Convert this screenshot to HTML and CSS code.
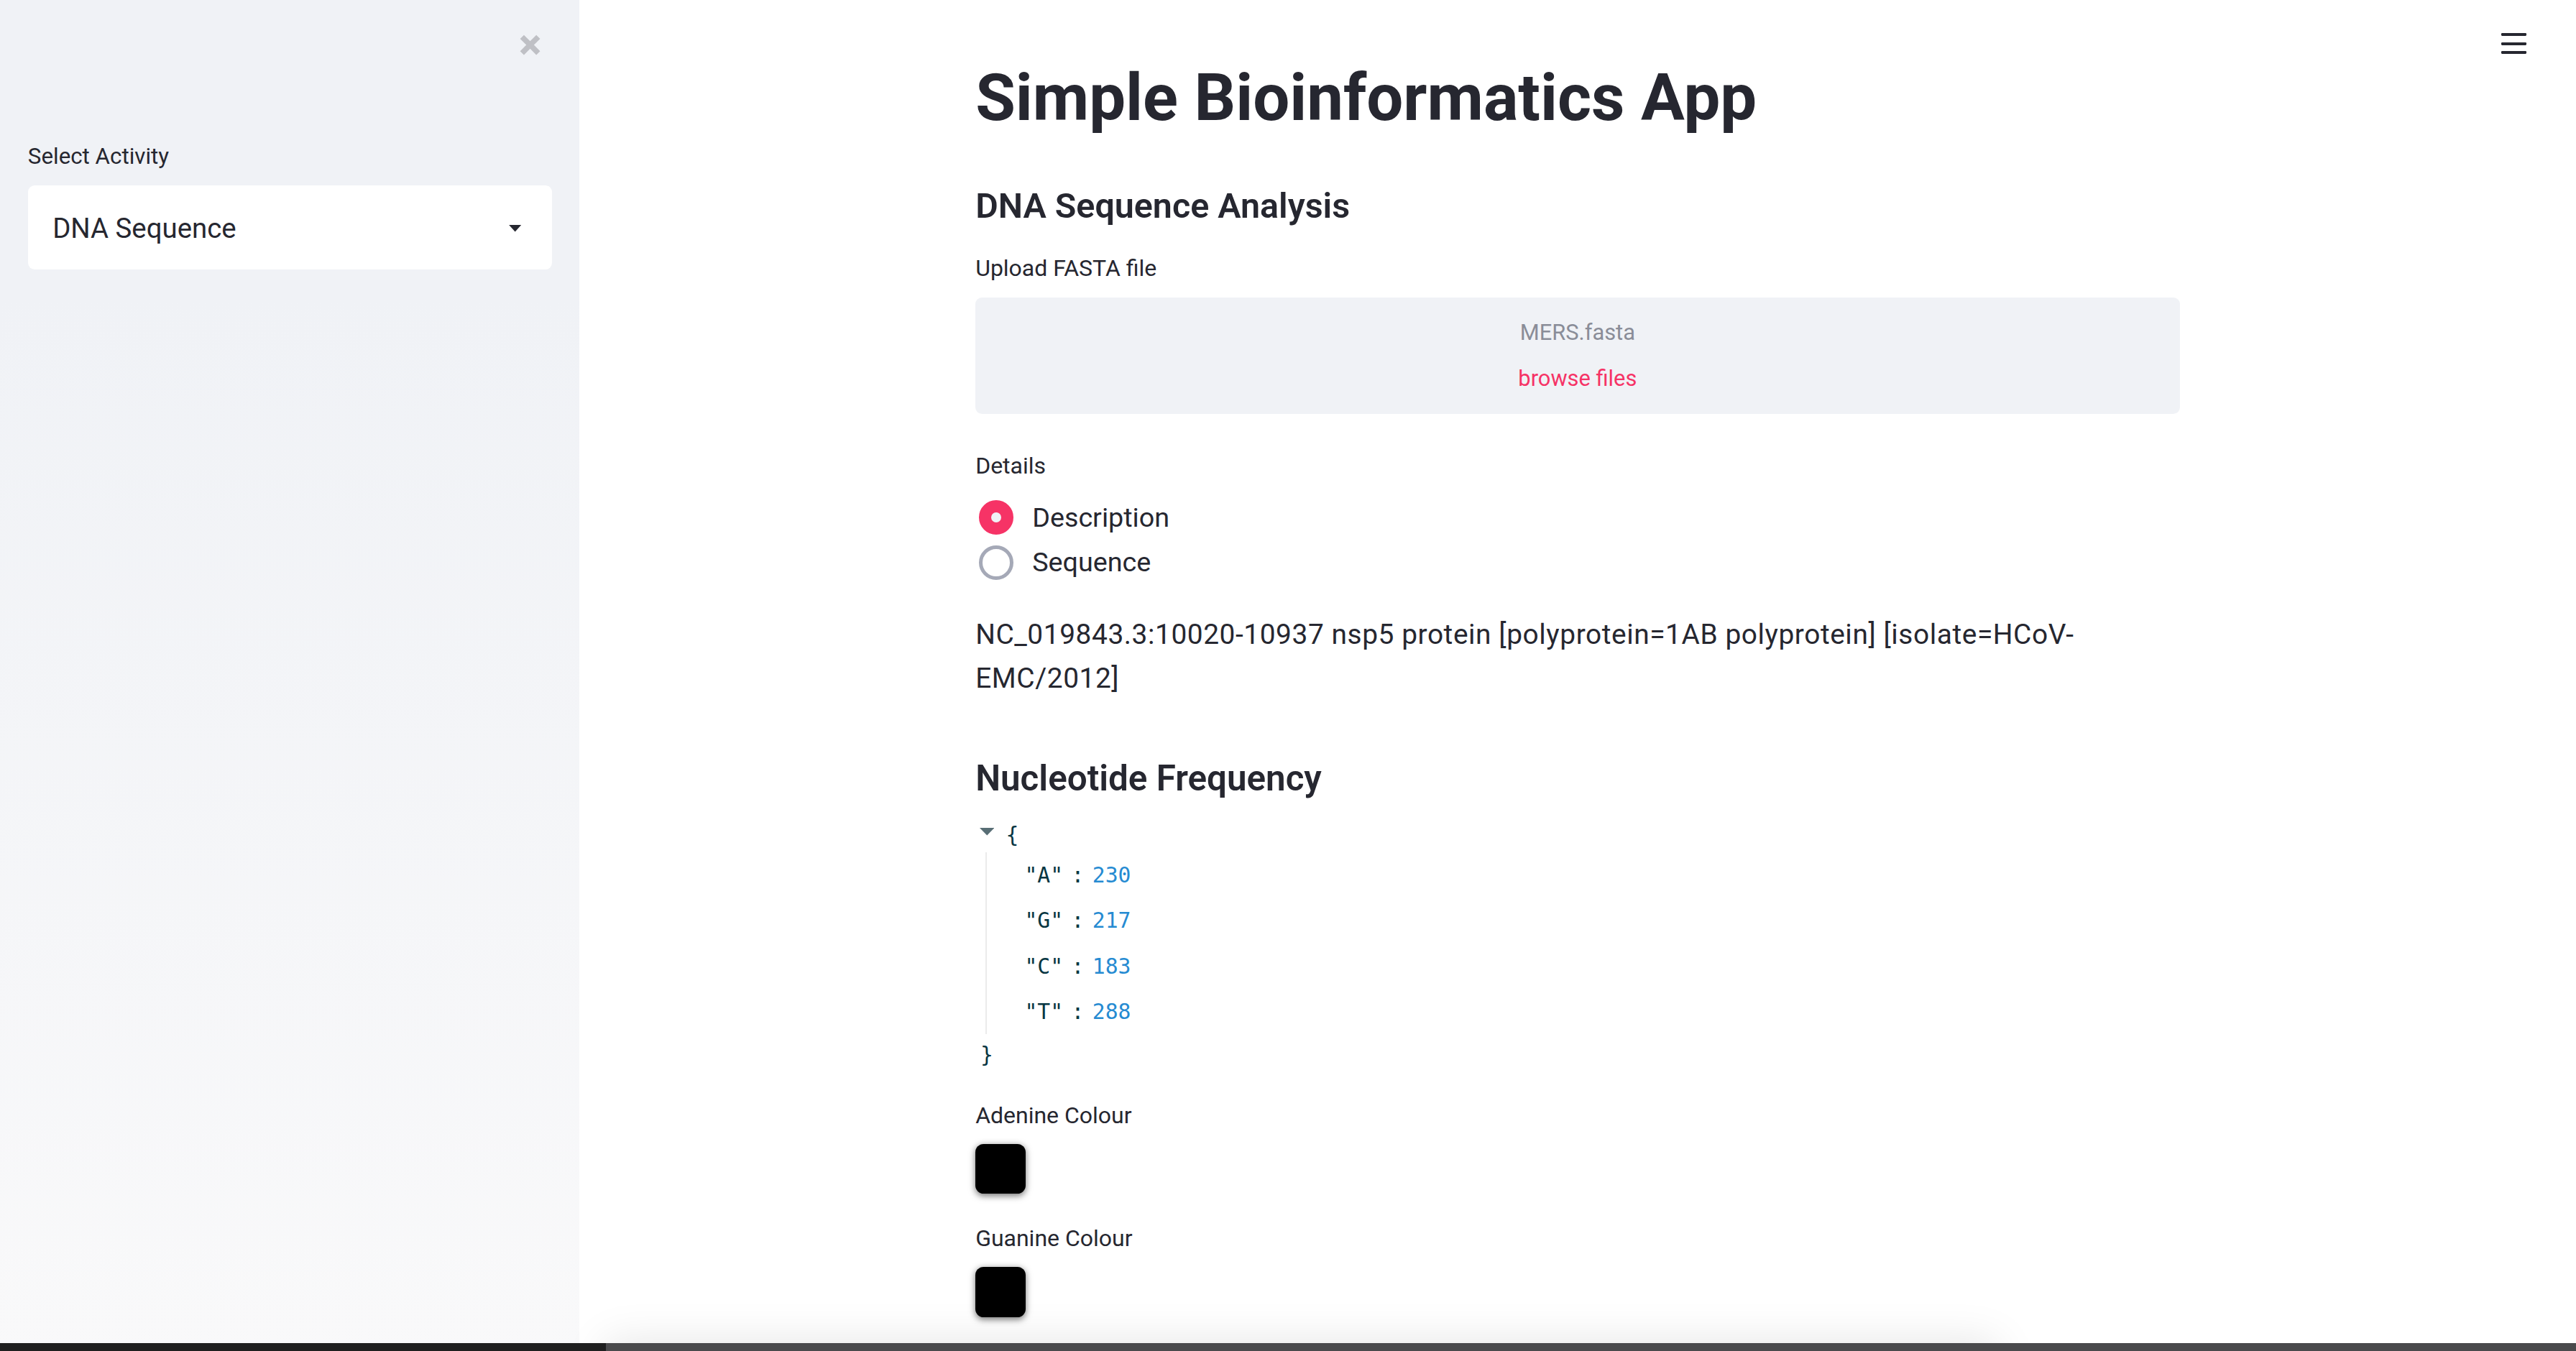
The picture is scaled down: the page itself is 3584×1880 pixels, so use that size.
FILE: index.html
```html
<!DOCTYPE html>
<html lang="en">
<head>
<meta charset="utf-8">
<title>Simple Bioinformatics App</title>
<link rel="stylesheet" href="styles.css">
</head>
<body>
<div class="app">
  <aside class="sidebar">
    <div class="sidebar-top">
      <svg class="close-icon" viewBox="0 0 15 15" width="14.5" height="14.5" aria-label="Close sidebar">
        <path d="M1.2 3.6 L3.6 1.2 L7.5 5.1 L11.4 1.2 L13.8 3.6 L9.9 7.5 L13.8 11.4 L11.4 13.8 L7.5 9.9 L3.6 13.8 L1.2 11.4 L5.1 7.5 Z" fill="#bfc0c5"/>
      </svg>
    </div>
    <div class="label sidebar-label">Select Activity</div>
    <div class="selectbox">
      <span class="select-value">DNA Sequence</span>
      <svg class="caret" viewBox="0 0 8 4.5" width="7.6" height="4.2"><path d="M0 0 H8 L4 4.5 Z" fill="#262730"/></svg>
    </div>
  </aside>

  <main class="main">
    <button class="menu-btn" aria-label="Menu">
      <span class="menu-line"></span>
      <span class="menu-line"></span>
      <span class="menu-line"></span>
    </button>

    <div class="block">
      <h1 class="title">Simple Bioinformatics App</h1>
      <h3 class="subheader first-sub">DNA Sequence Analysis</h3>

      <div class="label upload-label">Upload FASTA file</div>
      <div class="dropzone">
        <div class="file-name">MERS.fasta</div>
        <div class="browse">browse files</div>
      </div>

      <div class="label details-label">Details</div>
      <div class="radio-group">
        <div class="radio-row">
          <span class="radio radio-on"></span>
          <span class="radio-text">Description</span>
        </div>
        <div class="radio-row">
          <span class="radio radio-off"></span>
          <span class="radio-text">Sequence</span>
        </div>
      </div>

      <p class="desc">NC_019843.3:10020-10937 nsp5 protein [polyprotein=1AB polyprotein] [isolate=HCoV-EMC/2012]</p>

      <h3 class="subheader second-sub">Nucleotide Frequency</h3>

      <div class="json">
        <div class="json-open">
          <svg class="json-caret" viewBox="0 0 9 4.6" width="9" height="4.6"><path d="M0 0 H9 L4.5 4.6 Z" fill="#586e75"/></svg>
          <span class="brace">{</span>
        </div>
        <div class="json-body">
          <div class="json-row"><span class="key">"A"</span><span class="colon">:</span><span class="num">230</span></div>
          <div class="json-row"><span class="key">"G"</span><span class="colon">:</span><span class="num">217</span></div>
          <div class="json-row"><span class="key">"C"</span><span class="colon">:</span><span class="num">183</span></div>
          <div class="json-row"><span class="key">"T"</span><span class="colon">:</span><span class="num">288</span></div>
        </div>
        <div class="json-close"><span class="brace">}</span></div>
      </div>

      <div class="label colour-label first-colour">Adenine Colour</div>
      <div class="swatch swatch-first"></div>

      <div class="label colour-label second-colour">Guanine Colour</div>
      <div class="swatch swatch-second"></div>
    </div>

    <div class="bottom-shadow"></div>
  </main>
</div>
<div class="window-edge">
  <div class="edge-left"></div>
  <div class="edge-right"></div>
</div>
</body>
</html>
```
FILE: styles.css
```css
html {
  zoom: 2.285714;
  overflow: hidden;
}

body {
  margin: 0;
  font-family: Roboto, "Liberation Sans", Arial, sans-serif;
  color: #262730;
  background: #ffffff;
  overflow: hidden;
}

.app {
  display: flex;
  height: 822.6px;
  overflow: hidden;
}

/* ---------- Sidebar ---------- */
.sidebar {
  width: 352.5px;
  flex: none;
  box-sizing: border-box;
  padding: 20px 16.5px 0 17px;
  background: linear-gradient(180deg, #f0f2f6 0%, #f0f2f6 22%, #f9f9fa 100%);
}

.sidebar-top {
  display: flex;
  justify-content: flex-end;
  padding-right: 6px;
  height: 14.5px;
}

.close-icon {
  display: block;
}

.label {
  font-size: 14px;
  line-height: 20px;
  color: #262730;
}

.sidebar-label {
  margin-top: 51px;
  font-size: 13.7px;
}

.selectbox {
  margin-top: 7.6px;
  height: 51px;
  background: #ffffff;
  border-radius: 4px;
  display: flex;
  align-items: center;
  justify-content: space-between;
  padding: 0 18.5px 0 15px;
}

.select-value {
  font-size: 16.8px;
  line-height: 24px;
  position: relative;
  top: 0.6px;
}

.caret {
  display: block;
  position: relative;
  top: 0.5px;
}

/* ---------- Main ---------- */
.main {
  flex: 1;
  position: relative;
  background: #ffffff;
}

.menu-btn {
  position: absolute;
  top: 20px;
  right: 30px;
  width: 15.5px;
  height: 13px;
  padding: 0;
  border: 0;
  background: transparent;
  display: flex;
  flex-direction: column;
  justify-content: space-between;
}

.menu-line {
  display: block;
  width: 15.5px;
  height: 1.8px;
  background: #262730;
  border-radius: 0.5px;
}

.block {
  max-width: 733px;
  margin: 0 auto;
  padding-top: 36px;
}

.title {
  margin: 0;
  font-size: 39.6px;
  line-height: 48px;
  font-weight: 700;
  color: #262730;
}

.subheader {
  margin: 0;
  font-size: 21.2px;
  line-height: 28px;
  font-weight: 600;
  color: #262730;
}

.first-sub {
  margin-top: 27.6px;
}

.upload-label {
  margin-top: 14px;
}

.dropzone {
  margin-top: 7.4px;
  height: 71px;
  box-sizing: border-box;
  padding-top: 7.4px;
  background: #f0f2f6;
  border-radius: 4px;
  text-align: center;
  font-size: 13.5px;
  line-height: 28px;
}

.file-name {
  color: #8a8d98;
}

.browse {
  color: #f63366;
}

.details-label {
  margin-top: 21.9px;
}

.radio-group {
  margin-top: 7.4px;
}

.radio-row {
  display: flex;
  align-items: center;
  height: 27.5px;
}

.radio {
  box-sizing: border-box;
  width: 21px;
  height: 21px;
  border-radius: 50%;
  margin-left: 2px;
  margin-right: 11.6px;
  flex: none;
}

.radio-on {
  border: 7.5px solid #f63366;
  background: #f0f2f6;
}

.radio-off {
  border: 2.3px solid #a5a9b7;
  background: #ffffff;
}

.radio-text {
  font-size: 16.5px;
  line-height: 27.5px;
}

.desc {
  margin: 16.3px 0 0 0;
  font-size: 17px;
  letter-spacing: 0.25px;
  line-height: 26.7px;
}

.second-sub {
  margin-top: 34px;
  font-size: 21.6px;
}

/* ---------- JSON viewer ---------- */
.json {
  margin-top: 10px;
  font-family: "DejaVu Sans Mono", "Liberation Mono", monospace;
  font-size: 13px;
  color: #073642;
}

.json-open {
  display: flex;
  align-items: center;
  height: 21px;
  padding-left: 0.5px;
}

.json-caret {
  display: block;
  margin-left: 2px;
  margin-right: 7px;
  position: relative;
  top: -2px;
}

.brace {
  line-height: 20px;
}

.json-body {
  margin-left: 6px;
  border-left: 1px solid #ebebeb;
  padding-left: 23px;
}

.json-row {
  line-height: 27.7px;
  height: 27.7px;
}

.colon {
  margin: 0 5px;
}

.num {
  color: #268bd2;
}

.json-close {
  line-height: 23px;
  padding-left: 3px;
  padding-top: 1px;
}

.json-close .brace {
  line-height: 23px;
}

/* ---------- Colour pickers ---------- */
.first-colour {
  margin-top: 15.8px;
}

.second-colour {
  margin-top: 17.2px;
}

.swatch {
  width: 30.5px;
  height: 30.5px;
  border-radius: 5px;
  background: #000000;
  box-shadow: 0 1px 4px rgba(0, 0, 0, 0.55);
}

.swatch-first {
  margin-top: 6.8px;
}

.swatch-second {
  margin-top: 7.3px;
}

.bottom-shadow {
  position: absolute;
  left: 22px;
  width: 835px;
  bottom: -30px;
  height: 30px;
  background: #e6e6e6;
  box-shadow: 0 0 26px 6px rgba(0, 0, 0, 0.10);
}

/* ---------- Window bottom edge ---------- */
.window-edge {
  position: fixed;
  left: 0;
  right: 0;
  bottom: 0;
  height: 5px;
  display: flex;
}

.edge-left {
  width: 369px;
  background: #1f1f1f;
}

.edge-right {
  flex: 1;
  background: #4a4a4c;
}
```
